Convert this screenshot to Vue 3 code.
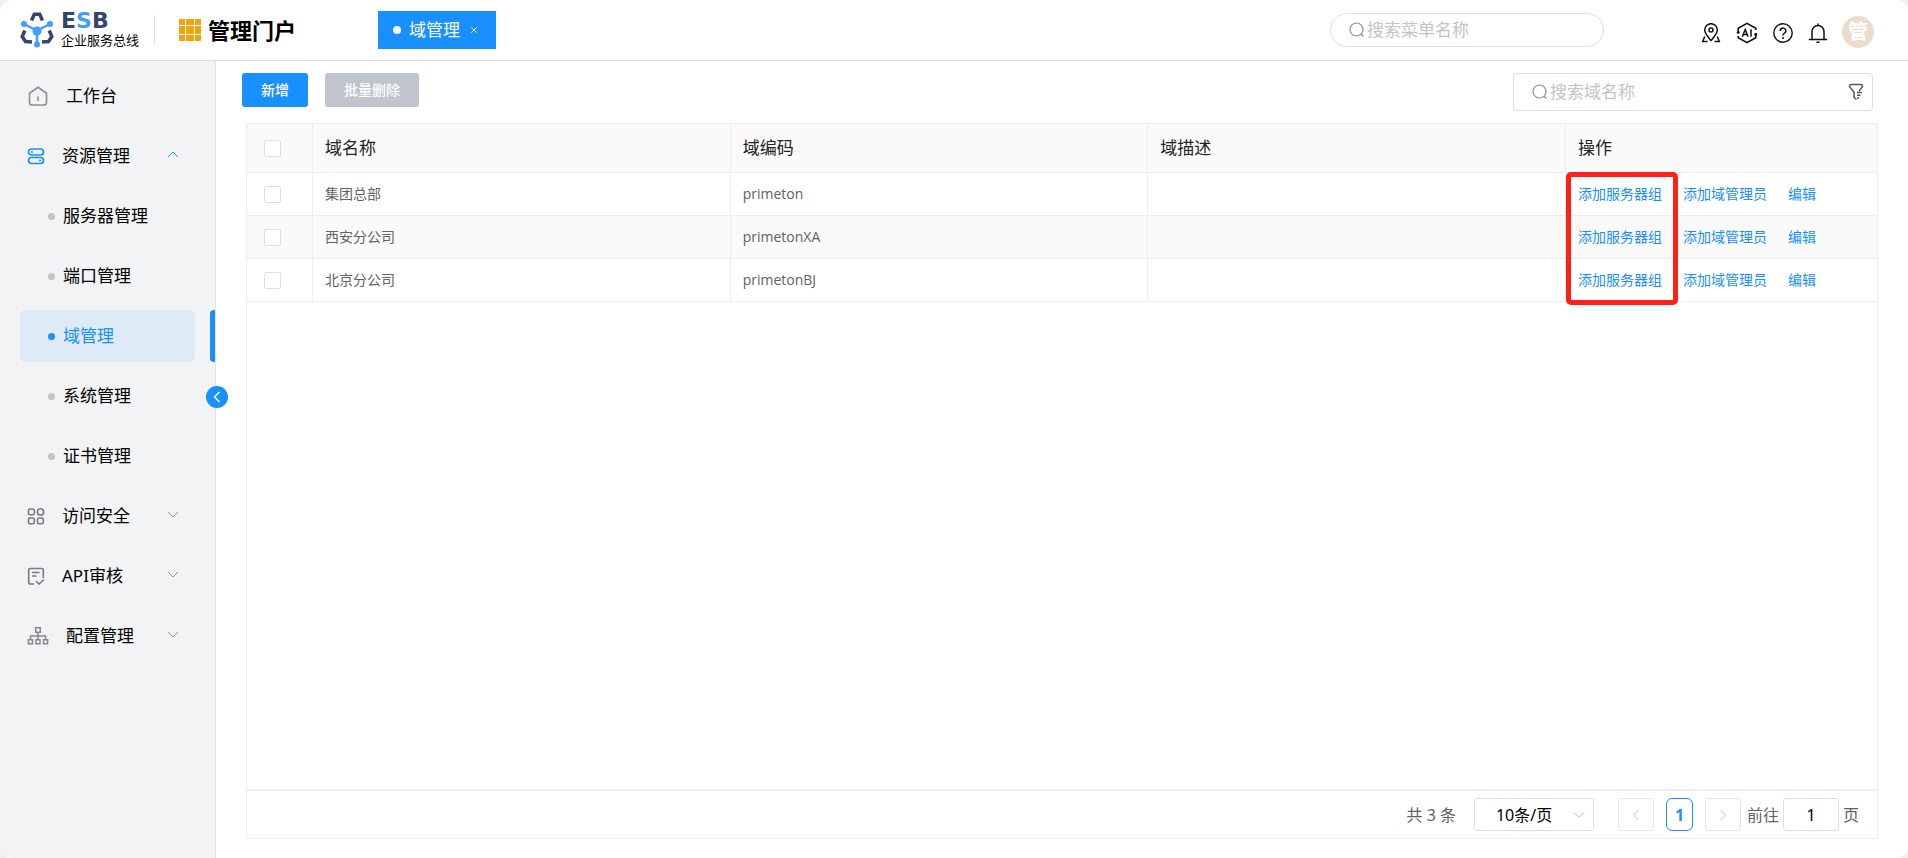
<script setup>
import { ref } from 'vue'

const menuTop = [
  { label: '工作台', icon: 'home', wide: true },
  { label: '资源管理', icon: 'server', arrow: 'up' },
]
const subMenu = ['服务器管理', '端口管理', '域管理', '系统管理', '证书管理']
const menuBottom = [
  { label: '访问安全', icon: 'apps', arrow: 'down' },
  { label: 'API审核', icon: 'audit', arrow: 'down' },
  { label: '配置管理', icon: 'tree', arrow: 'down', wide: true },
]
const current = ref('域管理')
const rows = [
  { name: '集团总部', code: 'primeton', desc: '' },
  { name: '西安分公司', code: 'primetonXA', desc: '' },
  { name: '北京分公司', code: 'primetonBJ', desc: '' },
]
const actions = ['添加服务器组', '添加域管理员', '编辑']
const pageNo = ref('1')
</script>

<template>
  <div class="app">
    <header class="header">
      <a class="logo" href="#" aria-label="ESB 企业服务总线">
        <svg class="logo-mark" viewBox="0 0 34 36" width="34" height="36" fill="none">
          <g stroke="#36456b" stroke-width="3.500">
            <path d="M11.500 8.500 14.300 2.200H19.700L22.500 8.500" />
            <path d="M4.800 18.500 2.200 24.500 5.500 29.500 12 30" />
            <path d="M29.200 18.500 31.800 24.500 28.500 29.500 22 30" />
          </g>
          <g stroke="#409eff" stroke-width="2.500"><path d="M4 12 17 18.500 30 12M17 18V33" /></g>
          <g fill="#409eff"><circle cx="4" cy="12" r="3" /><circle cx="30" cy="12" r="3" /><circle cx="17" cy="32.500" r="3" /><circle cx="17" cy="19" r="4.500" /></g>
        </svg>
        <span class="logo-text">
          <span class="logo-en">E<span class="blue">S</span>B</span>
          <span class="logo-cn">企业服务总线</span>
        </span>
      </a>
      <span class="divider"></span>
      <svg class="grid-icon" viewBox="0 0 22 22" width="22" height="22" fill="#f0a30a">
        <path d="M0 0h6v6H0zM7 0h8v6H7zM16 0h6v6h-6zM0 7h6v8H0zM7 7h8v8H7zM16 7h6v8h-6zM0 16h6v6H0zM7 16h8v6H7zM16 16h6v6h-6z" />
      </svg>
      <h1 class="portal">管理门户</h1>
      <div class="tab">
        <span class="tab-dot"></span>
        <span>域管理</span>
        <button class="tab-close" type="button" aria-label="关闭">
          <svg viewBox="0 0 8 8" width="8" height="8" fill="none" stroke="#fff"><path d="M1 1 7 7M7 1 1 7" /></svg>
        </button>
      </div>
      <label class="search menu-search">
        <svg viewBox="0 0 16 16" width="16" height="16" fill="none" stroke="#8c8f96" stroke-width="1.200"><circle cx="7.500" cy="7.500" r="6.500" /><path d="M12 12 14.500 14.500" /></svg>
        <input type="text" placeholder="搜索菜单名称" aria-label="搜索菜单名称" />
      </label>
      <nav class="tools" aria-label="工具">
        <button type="button" aria-label="导航">
          <svg viewBox="0 0 20 20" width="20" height="20" fill="none" stroke="#111" stroke-width="1.500"><path d="M10 17.500C6.500 13.500 3.700 10.500 3.700 7a6.300 6.300 0 0 1 12.600 0c0 3.500-2.800 6.500-6.300 10.500z" /><circle cx="10" cy="7" r="2" /><path d="M3.700 13.500 1.700 18.500H6.500M16.300 13.500 18.300 18.500H13.500" /></svg>
        </button>
        <button type="button" aria-label="AI助手">
          <svg viewBox="0 0 22 22" width="22" height="22" fill="none" stroke="#111" stroke-width="1.600"><path d="M2.200 9.500V6.200L11 1.400 19.800 6.200V8M19.800 12.500V15.800L11 20.600 2.200 15.800V14" /><path d="M6.300 14.800 9.200 7.500 12.100 14.800M7.300 12.600H11.100M15 7.200V14.800" stroke-width="1.500" /><g fill="#111" stroke="none"><circle cx="2.200" cy="10.200" r="1.500" /><circle cx="19.800" cy="12.200" r="1.500" /></g></svg>
        </button>
        <button type="button" aria-label="帮助">
          <svg viewBox="0 0 20 20" width="20" height="20" fill="none" stroke="#1f1a1a" stroke-width="1.500"><circle cx="10" cy="10" r="9.200" /><path d="M7.200 8A2.800 2.800 0 1 1 11.200 10.400Q10 11 10 12.500" stroke-width="1.600" /><circle cx="10" cy="15" r="1.100" fill="#1f1a1a" stroke="none" /></svg>
        </button>
        <button type="button" aria-label="通知">
          <svg viewBox="0 0 20 20" width="20" height="20" fill="none" stroke="#111" stroke-width="1.500"><path d="M10 .5V2.500M4 16V8.500a6 6 0 0 1 12 0V16M.8 16.500H19.200M8.500 19.200H11.500" /></svg>
        </button>
      </nav>
      <button class="avatar" type="button">管</button>
    </header>

    <div class="body">
      <aside class="sidebar">
        <ul class="menu">
          <li v-for="m in menuTop" :key="m.label">
            <a href="#" class="item" :class="{ wide: m.wide }">
              <svg v-if="m.icon === 'home'" viewBox="0 0 20 20" width="20" height="20" fill="none" stroke="#8f9399" stroke-width="1.700"><path d="M1.500 7.300 10 1.200 18.500 7.300V16.500Q18.500 19 16 19H4Q1.500 19 1.500 16.500Z" stroke-linejoin="round" /><path d="M10 10.500V15" /></svg>
              <svg v-else viewBox="0 0 18 18" width="18" height="18" fill="none" stroke="#1890ff" stroke-width="1.700"><rect x="1.500" y="2" width="15" height="6" rx="3" /><rect x="1.500" y="10.500" width="15" height="6" rx="3" /><path d="M4 5H6M12 13.500H14" /></svg>
              <span>{{ m.label }}</span>
              <svg v-if="m.arrow" class="arrow" viewBox="0 0 12 12" width="12" height="12" fill="none" stroke="#1890ff"><path d="M1 7 6 2 11 7" /></svg>
            </a>
          </li>
          <li v-for="s in subMenu" :key="s">
            <a href="#" class="item sub" :class="{ active: s === current }" @click.prevent="current = s">
              <span class="dot"></span><span>{{ s }}</span>
            </a>
          </li>
          <li v-for="m in menuBottom" :key="m.label">
            <a href="#" class="item" :class="{ wide: m.wide }">
              <svg v-if="m.icon === 'apps'" viewBox="0 0 18 18" width="18" height="18" fill="none" stroke="#777b80" stroke-width="1.600"><rect x="1.500" y="2" width="5.800" height="5.800" rx="1.500" /><circle cx="13.500" cy="4.900" r="3.100" /><rect x="1.500" y="11" width="5.800" height="5.800" rx="1.500" /><rect x="10.500" y="11" width="5.800" height="5.800" rx="1.500" /></svg>
              <svg v-else-if="m.icon === 'audit'" viewBox="0 0 18 18" width="18" height="18" fill="none" stroke="#777b80" stroke-width="1.600"><path d="M7 17H3.500Q1.700 17 1.700 15.200V3.300Q1.700 1.500 3.500 1.500H14.500Q16.300 1.500 16.300 3.300V11M5 5.500H12.500M5 9H9.500M9 14 12 17 17 12.500" /></svg>
              <svg v-else viewBox="0 0 24 20" width="24" height="20" fill="none" stroke="#85888c" stroke-width="1.600"><path d="M9.500 1H14.500V6H9.500ZM1.500 14H6V18.500H1.500ZM9.700 14H14.200V18.500H9.700ZM18 14H22.500V18.500H18ZM12 6V14M3.800 14V10H20.200V14" /></svg>
              <span>{{ m.label }}</span>
              <svg class="arrow" viewBox="0 0 12 12" width="12" height="12" fill="none" stroke="#909399"><path d="M1 2 6 7 11 2" /></svg>
            </a>
          </li>
        </ul>
        <button class="collapse" type="button" aria-label="收起菜单">
          <svg viewBox="0 0 8 12" width="8" height="12" fill="none" stroke="#fff" stroke-width="1.500"><path d="M6.500 1 1.500 6 6.500 11" /></svg>
        </button>
      </aside>

      <main class="main">
        <div class="toolbar">
          <button class="btn primary" type="button">新增</button>
          <button class="btn disabled" type="button" disabled>批量删除</button>
          <div class="search domain-search">
            <svg viewBox="0 0 16 16" width="16" height="16" fill="none" stroke="#8c8f96" stroke-width="1.200"><circle cx="7.500" cy="7.500" r="6.500" /><path d="M12 12 14.500 14.500" /></svg>
            <input type="text" placeholder="搜索域名称" aria-label="搜索域名称" />
            <button class="filter" type="button" aria-label="筛选">
              <svg viewBox="0 0 16 18" width="16" height="18" fill="none" stroke="#55585e" stroke-width="1.500"><path d="M8.500 16.500 6 14.500V9L1.700 4Q1 1.500 3 1.500H13Q15 1.500 14.300 4L11 8M9 9.500H14M9 12.300H12.500M9 15H11" /></svg>
            </button>
          </div>
        </div>

        <section class="panel">
          <div class="table-area">
            <table>
              <colgroup><col class="c-check" /><col /><col /><col /><col class="c-ops" /></colgroup>
              <thead>
                <tr>
                  <th><input type="checkbox" aria-label="全选" /></th>
                  <th>域名称</th>
                  <th>域编码</th>
                  <th>域描述</th>
                  <th class="ops-head">操作<span class="mark"></span></th>
                </tr>
              </thead>
              <tbody>
                <tr v-for="r in rows" :key="r.code">
                  <td><input type="checkbox" :aria-label="r.name" /></td>
                  <td>{{ r.name }}</td>
                  <td>{{ r.code }}</td>
                  <td>{{ r.desc }}</td>
                  <td><div class="ops"><a v-for="a in actions" :key="a" href="#">{{ a }}</a></div></td>
                </tr>
              </tbody>
            </table>
          </div>
          <footer class="pager">
            <span class="total">共 3 条</span>
            <span class="size">
              <select aria-label="每页条数"><option>10条/页</option></select>
              <svg viewBox="0 0 12 8" width="12" height="8" fill="none" stroke="#b4b8bf"><path d="M1 1.500 6 6.500 11 1.500" /></svg>
            </span>
            <button class="step" type="button" disabled aria-label="上一页"><svg viewBox="0 0 8 12" width="8" height="12" fill="none" stroke="#dcdfe6" stroke-width="1.500"><path d="M6.500 1 1.500 6 6.500 11" /></svg></button>
            <button class="page" type="button">1</button>
            <button class="step" type="button" disabled aria-label="下一页"><svg viewBox="0 0 8 12" width="8" height="12" fill="none" stroke="#dcdfe6" stroke-width="1.500"><path d="M1.500 1 6.500 6 1.500 11" /></svg></button>
            <label class="jump">前往<input v-model="pageNo" type="text" />页</label>
          </footer>
        </section>
      </main>
    </div>
  </div>
</template>

<style>
body { background: #f0f0f0; }
</style>

<style scoped>
* { box-sizing: border-box; }
.app {
  display: flex; flex-direction: column; min-height: 100vh; overflow: hidden;
  background: #fff; border-radius: 12px; color: #000;
  font: 17px/24px "Noto Sans", "Noto Sans CJK SC", sans-serif;
}
button, input, select { font: inherit; color: inherit; }
button { padding: 0; border: 0; background: none; cursor: pointer; }
a { color: inherit; text-decoration: none; }
svg { display: block; flex: none; }

.header { display: flex; align-items: center; height: 61px; padding: 0 34px 0 20px; border-bottom: 1px solid #dcdcdc; }
.logo { display: flex; align-items: center; gap: 7px; width: 119px; }
.logo-text { display: flex; flex-direction: column; gap: 2px; white-space: nowrap; }
.logo-en { font: bold 22px/18px "DejaVu Sans", sans-serif; color: #36456b; }
.blue { color: #409eff; }
.logo-cn { font-size: 13px; line-height: 16px; }
.divider { width: 1px; height: 30px; margin: 0 24px 0 15px; background: #dcdfe6; }
.portal { margin: 0 82px 0 7px; font-size: 22px; line-height: 30px; font-weight: 700; }
.tab { display: flex; align-items: center; height: 38px; padding: 0 18px 0 15px; background: #1890ff; color: #fff; }
.tab-dot { width: 8px; height: 8px; margin-right: 8px; border-radius: 50%; background: #fff; }
.tab-close { margin-left: 10px; }
.search { display: flex; align-items: center; gap: 2px; border: 1px solid #dcdfe6; background: #fff; }
.search input { flex: 1; min-width: 0; padding: 0; border: 0; outline: 0; background: none; }
.search input::placeholder { color: #c0c4cc; opacity: 1; }
.menu-search { width: 274px; height: 34px; margin: 0 97px 0 auto; padding: 0 18px; border-radius: 17px; }
.tools { display: flex; align-items: center; gap: 15px; margin-right: 14px; padding-top: 6px; }
.avatar { width: 32px; height: 32px; margin-top: 4px; border-radius: 50%; background: #ecdccb; color: #fff; font-size: 20px; font-weight: 700; line-height: 32px; }

.body { display: flex; flex: 1; }
.sidebar { position: relative; width: 216px; padding-top: 5px; background: #f1f3f5; border-right: 1px solid #e2e4e7; }
.menu { margin: 0; padding: 0; list-style: none; }
.menu li { display: flex; align-items: center; position: relative; height: 60px; padding: 0 20px; }
.item { display: flex; align-items: center; width: 175px; height: 52px; flex: none; padding: 0 16px 0 7px; border-radius: 6px; gap: 17px; }
.item.wide svg:first-child { width: 22px; }
.arrow { margin-left: auto; }
.sub { gap: 8px; padding-left: 28px; }
.dot { width: 7px; height: 7px; border-radius: 50%; background: #c4c4c4; }
.active { background: #deeaf6; color: #1890ff; }
.active .dot { background: #1890ff; }
.active::after { content: ""; position: absolute; right: 0; top: 4px; width: 5px; height: 52px; border-radius: 4px 0 0 4px; background: #1890ff; }
.collapse { position: absolute; right: -13px; top: 325px; display: grid; place-items: center; width: 22px; height: 22px; border-radius: 50%; background: #1890ff; }

.main { display: flex; flex: 1; flex-direction: column; min-width: 0; padding: 12px 30px 19px; }
.toolbar { display: flex; align-items: flex-start; gap: 17px; padding: 0 5px 0 0; margin-left: -4px; }
.btn { height: 34px; padding: 0 19px; border-radius: 3px; color: #fff; font-size: 14px; font-weight: 500; }
.primary { background: #1890ff; }
.disabled { background: #bfc4cd; cursor: default; }
.domain-search { width: 360px; height: 38px; margin-left: auto; padding: 0 8px 0 18px; border-radius: 3px; }

.panel { display: flex; flex: 1; flex-direction: column; margin-top: 12px; border: 1px solid #ebeef5; }
.table-area { flex: 1; border-bottom: 2px solid #ebeef5; }
table { width: 100%; table-layout: fixed; border-collapse: separate; border-spacing: 0; font-size: 14px; line-height: 20px; color: #606266; }
.c-check { width: 66px; }
.c-ops { width: 311px; }
th, td { height: 43px; padding: 0 12px; border-right: 1px solid #ebeef5; border-bottom: 1px solid #ebeef5; text-align: left; }
td { font-family: "Open Sans", "Noto Sans CJK SC", sans-serif; }
th { height: 49px; background: #fafafa; color: #222; font-size: 17px; line-height: 24px; font-weight: 400; }
th:last-child, td:last-child { border-right: 0; }
th:first-child, td:first-child { padding-left: 17px; }
tbody tr:nth-child(even) td { background: #fafafa; }
input[type="checkbox"] { display: block; appearance: none; width: 17px; height: 17px; margin: 0; border: 1px solid #dcdfe6; border-radius: 2px; background: #fff; }
.ops { display: flex; gap: 21px; color: #1890ff; }
.ops-head { position: relative; }
.mark { position: absolute; left: 0; top: 100%; width: 112px; height: 133px; border: 5px solid #ff2116; border-radius: 5px; pointer-events: none; }

.pager { display: flex; align-items: center; justify-content: flex-end; height: 47px; padding-right: 18px; font-size: 16px; color: #606266; }
.size { position: relative; display: flex; align-items: center; margin: 0 24px 0 18px; }
.size select { appearance: none; width: 120px; height: 33px; padding: 0 0 0 21px; border: 1px solid #dcdfe6; border-radius: 3px; background: #fff; color: #000; }
.size svg { position: absolute; right: 9px; }
.step { display: grid; place-items: center; width: 36px; height: 33px; border: 1px solid #e4e7ed; border-radius: 3px; }
.page { width: 27px; height: 33px; margin: 0 12px; border: 1px solid #1890ff; border-radius: 6px; color: #1890ff; font-weight: 700; }
.jump { display: flex; align-items: center; gap: 4px; margin-left: 6px; }
.jump input { width: 56px; height: 33px; padding: 0; border: 1px solid #dcdfe6; border-radius: 3px; text-align: center; color: #000; }
</style>
